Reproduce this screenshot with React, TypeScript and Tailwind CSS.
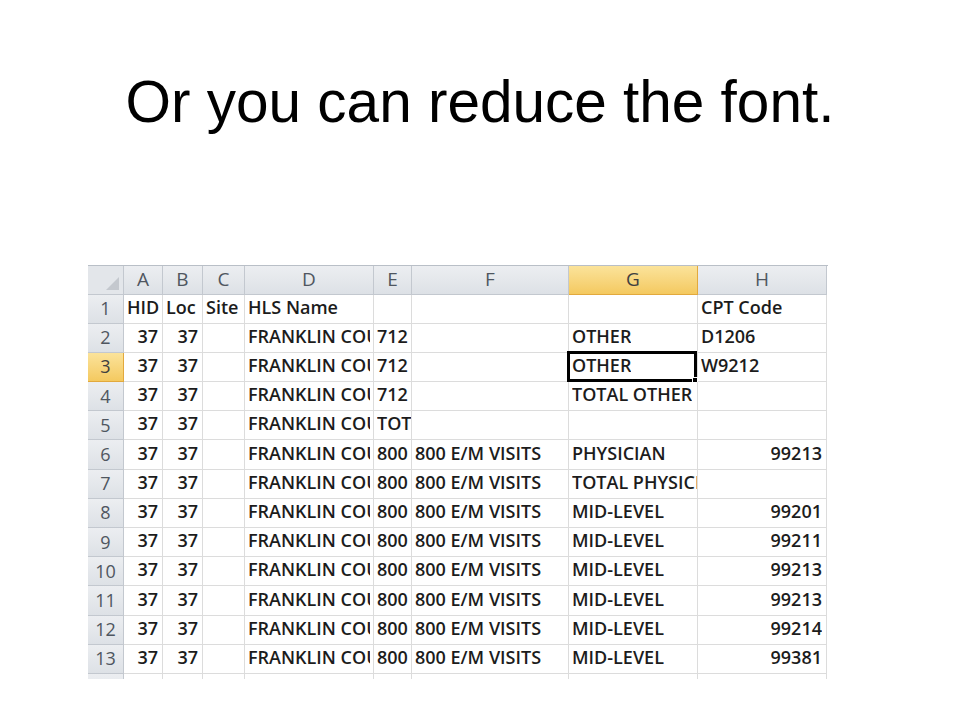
import React from 'react';

const colW = ['w-[39px]', 'w-[40px]', 'w-[42px]', 'w-[129px]', 'w-[38px]', 'w-[157px]', 'w-[129px]', 'w-[129px]'];
const textW = ['max-w-[35px]', 'max-w-[36px]', 'max-w-[38px]', 'max-w-[122px]', 'max-w-[34px]', 'max-w-[153px]', 'max-w-[125px]', 'max-w-[125px]'];
const letters = ['A', 'B', 'C', 'D', 'E', 'F', 'G', 'H'];

type Row = { n: number; cells: string[] };

const rows: Row[] = [
    { n: 1, cells: ['HID', 'Loc', 'Site', 'HLS Name', '', '', '', 'CPT Code'] },
    { n: 2, cells: ['37', '37', '', 'FRANKLIN COUNTY', '712', '', 'OTHER', 'D1206'] },
    { n: 3, cells: ['37', '37', '', 'FRANKLIN COUNTY', '712', '', 'OTHER', 'W9212'] },
    { n: 4, cells: ['37', '37', '', 'FRANKLIN COUNTY', '712', '', 'TOTAL OTHER', ''] },
    { n: 5, cells: ['37', '37', '', 'FRANKLIN COUNTY', 'TOTAL', '', '', ''] },
    { n: 6, cells: ['37', '37', '', 'FRANKLIN COUNTY', '800', '800 E/M VISITS', 'PHYSICIAN', '99213'] },
    { n: 7, cells: ['37', '37', '', 'FRANKLIN COUNTY', '800', '800 E/M VISITS', 'TOTAL PHYSICIAN', ''] },
    { n: 8, cells: ['37', '37', '', 'FRANKLIN COUNTY', '800', '800 E/M VISITS', 'MID-LEVEL', '99201'] },
    { n: 9, cells: ['37', '37', '', 'FRANKLIN COUNTY', '800', '800 E/M VISITS', 'MID-LEVEL', '99211'] },
    { n: 10, cells: ['37', '37', '', 'FRANKLIN COUNTY', '800', '800 E/M VISITS', 'MID-LEVEL', '99213'] },
    { n: 11, cells: ['37', '37', '', 'FRANKLIN COUNTY', '800', '800 E/M VISITS', 'MID-LEVEL', '99213'] },
    { n: 12, cells: ['37', '37', '', 'FRANKLIN COUNTY', '800', '800 E/M VISITS', 'MID-LEVEL', '99214'] },
    { n: 13, cells: ['37', '37', '', 'FRANKLIN COUNTY', '800', '800 E/M VISITS', 'MID-LEVEL', '99381'] },
];

// columns E and F hold text codes, so they stay left aligned
const rightAligned = (s: string, col: number) => /^\d+$/.test(s) && col !== 4;

const headBase = 'shrink-0 h-full flex items-center justify-center border-r border-b';
const headNormal = 'bg-gradient-to-b from-[#eceef1] to-[#dde1e6] border-[#c3c8cf] text-[#4f5660]';
const headActive = 'bg-gradient-to-b from-[#fbe39a] to-[#f4c95f] border-[#e2a93d] text-[#404040]';

function Cell({ value, col, selected }: { value: string; col: number; selected?: boolean }) {
    const right = rightAligned(value, col);
    return (
        <div
            className={`relative h-full shrink-0 border-r border-b border-[#dcdcdc] flex items-end pb-[2px] ${colW[col]} ${right ? 'justify-end pr-[4px]' : 'pl-[3px]'}`}
        >
            <span className={`whitespace-nowrap overflow-hidden block ${textW[col]}`}>{value}</span>
            {selected && (
                <div className="absolute -left-[2px] -top-[2px] w-[130px] h-[31px] border-[3px] border-black">
                    <div className="absolute -right-[4px] -bottom-[4px] w-[6px] h-[6px] bg-black border border-white" />
                </div>
            )}
        </div>
    );
}

function App() {
    return (
        <div className="w-[960px] h-[720px] bg-white overflow-hidden pt-[73px]">
            <h1 className="text-center text-[58.5px] leading-none text-black font-['Liberation_Sans',Arial,sans-serif]">
                Or you can reduce the font.
            </h1>

            <div className="ml-[88px] mt-[133px] w-[740px] h-[414px] overflow-hidden border-t border-[#b9bfc7] text-[18px] font-semibold text-[#1c1c1c] font-['Open_Sans',Lato,sans-serif]">
                {/* column headers */}
                <div className="flex h-[29px]">
                    <div className="relative shrink-0 w-[36px] h-full bg-[#e3e6ea] border-r border-b border-[#c3c8cf]">
                        <div className="absolute right-[4px] bottom-[4px] w-0 h-0 border-l-[13px] border-l-transparent border-b-[13px] border-b-[#c4c8ce]" />
                    </div>
                    {letters.map((l, i) => (
                        <div key={l} className={`${headBase} ${colW[i]} text-[19px] font-normal ${l === 'G' ? headActive : headNormal}`}>
                            {l}
                        </div>
                    ))}
                </div>

                {rows.map((r) => (
                    <div key={r.n} className="flex h-[29.2px]">
                        <div className={`${headBase} w-[36px] text-[18px] font-normal ${r.n === 3 ? headActive : headNormal}`}>{r.n}</div>
                        {r.cells.map((c, i) => (
                            <Cell key={i} value={c} col={i} selected={r.n === 3 && i === 6} />
                        ))}
                    </div>
                ))}

                {/* partial row 14 */}
                <div className="flex h-[29px]">
                    <div className={`shrink-0 w-[36px] h-full border-r ${headNormal}`} />
                    {letters.map((l, i) => (
                        <div key={l} className={`shrink-0 h-full border-r border-[#dcdcdc] ${colW[i]}`} />
                    ))}
                </div>
            </div>
        </div>
    );
}

export default App;
